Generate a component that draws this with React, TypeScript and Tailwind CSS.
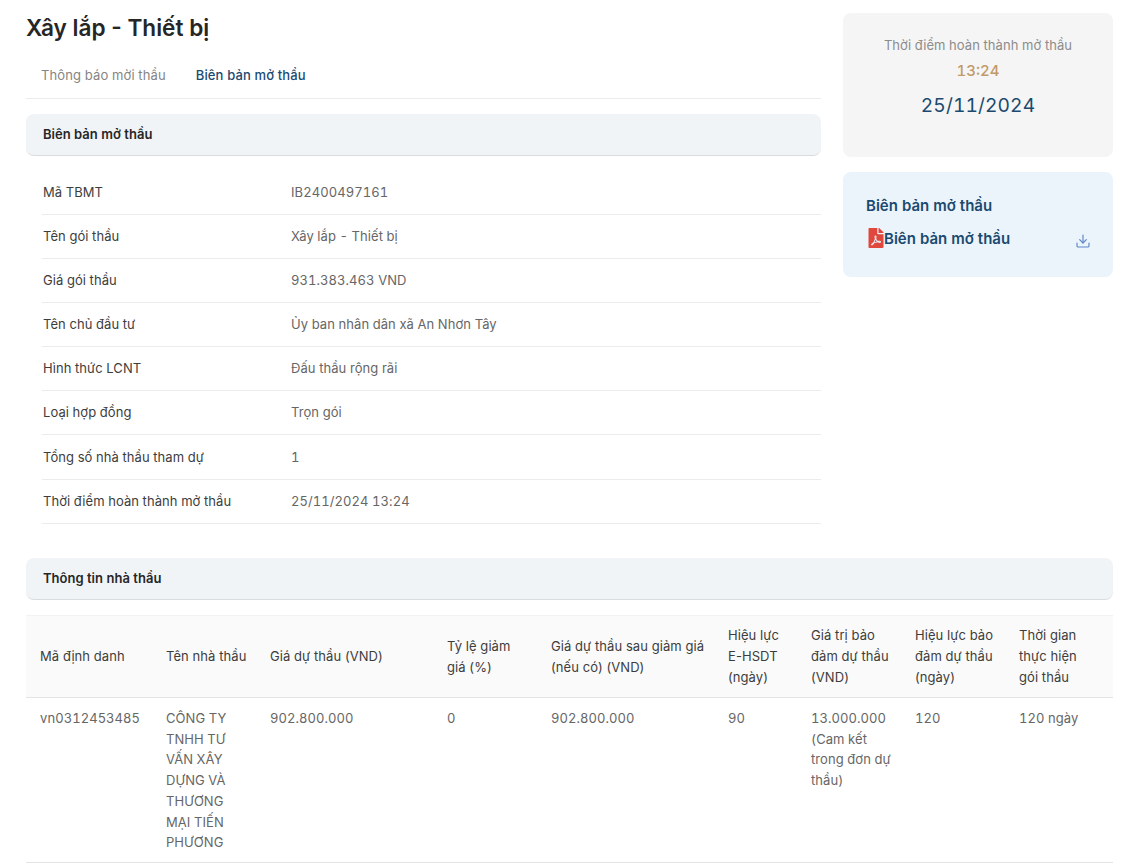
import React from 'react';
import { Download } from 'lucide-react';
import { FaFilePdf } from 'react-icons/fa';

const infoRows = [
  ['Mã TBMT', 'IB2400497161'],
  ['Tên gói thầu', 'Xây lắp - Thiết bị'],
  ['Giá gói thầu', '931.383.463 VND'],
  ['Tên chủ đầu tư', 'Ủy ban nhân dân xã An Nhơn Tây'],
  ['Hình thức LCNT', 'Đấu thầu rộng rãi'],
  ['Loại hợp đồng', 'Trọn gói'],
  ['Tổng số nhà thầu tham dự', '1'],
  ['Thời điểm hoàn thành mở thầu', '25/11/2024 13:24'],
];

const columns = [
  { label: 'Mã định danh', width: 'w-[126px]' },
  { label: 'Tên nhà thầu', width: 'w-[104px]' },
  { label: 'Giá dự thầu (VND)', width: 'w-[177px]' },
  { label: 'Tỷ lệ giảm giá (%)', width: 'w-[104px]' },
  { label: 'Giá dự thầu sau giảm giá (nếu có) (VND)', width: 'w-[177px]' },
  { label: 'Hiệu lực E-HSDT (ngày)', width: 'w-[83px]' },
  { label: 'Giá trị bảo đảm dự thầu (VND)', width: 'w-[104px]' },
  { label: 'Hiệu lực bảo đảm dự thầu (ngày)', width: 'w-[104px]' },
  { label: 'Thời gian thực hiện gói thầu', width: 'w-[108px]' },
];

const bidder = [
  'vn0312453485',
  'CÔNG TY TNHH TƯ VẤN XÂY DỰNG VÀ THƯƠNG MẠI TIẾN PHƯƠNG',
  '902.800.000',
  '0',
  '902.800.000',
  '90',
  '13.000.000 (Cam kết trong đơn dự thầu)',
  '120',
  '120 ngày',
];

const SectionBar: React.FC<{ title: string }> = ({ title }) => (
  <div className="h-[42px] flex items-center px-[17px] bg-[#f1f4f7] rounded-lg border-b border-[#d9dcdf] text-[13px] font-semibold text-[#262626]">
    {title}
  </div>
);

const App: React.FC = () => {
  return (
    <div className="min-h-screen bg-white pl-[26px] pr-2 pt-[13px] font-['Inter',sans-serif] tabular-nums overflow-hidden">
      <div className="flex gap-[22px]">
        <div className="w-[795px]">
          <h1 className="text-[22.6px] leading-[30px] font-semibold text-[#262626] normal-nums">Xây lắp - Thiết bị</h1>
          <div className="mt-[10px] h-[46px] flex items-center gap-[30px] px-[15px] border-b border-[#ececec] text-[13px] tracking-[0.13px]">
            <span className="text-[#858585]">Thông báo mời thầu</span>
            <span className="text-[#1b4a70] font-medium">Biên bản mở thầu</span>
          </div>
          <div className="mt-[15px]">
            <SectionBar title="Biên bản mở thầu" />
          </div>
          <div className="mt-[15px]">
            {infoRows.map(([label, value], i) => (
              <div key={label} className={`ml-[16px] flex items-center border-b border-[#ececec] text-[13px] tracking-[0.07px] ${i === 6 ? 'h-[45px] pt-[2px]' : 'h-[44px]'}`}>
                <div className="w-[249px] text-[#3d3d3d] pl-px">{label}</div>
                <div className="text-[#666666]">{value}</div>
              </div>
            ))}
          </div>
        </div>
        <div className="w-[270px]">
          <div className="h-[144px] bg-[#f5f5f5] rounded-lg pt-[23px] flex flex-col items-center">
            <div className="text-[13px] leading-[18px] text-[#8c8c8c] tracking-[0.07px]">Thời điểm hoàn thành mở thầu</div>
            <div className="mt-[8px] text-[15px] leading-[18px] font-medium text-[#c29a68]">13:24</div>
            <div className="mt-[11px] text-[19.2px] leading-[28px] font-normal text-[#1b4a70] tracking-[0.1px]">25/11/2024</div>
          </div>
          <div className="mt-[15px] h-[105px] bg-[#ebf4fb] rounded-lg pl-[23px] pr-[21px] pt-[24px]">
            <div className="text-[15px] leading-[20px] font-semibold text-[#1b4a70]">Biên bản mở thầu</div>
            <div className="mt-[11px] flex items-center justify-between">
              <div className="flex items-start text-[15px] leading-[20px] font-semibold text-[#1b4a70]">
                <FaFilePdf className="w-[16px] h-[20px] ml-[2px] text-[#e0483e]" />
                <span className="mt-px">Biên bản mở thầu</span>
              </div>
              <Download className="w-[16px] h-[16px] mt-[6px] mr-[1px] text-[#5f86c9]" strokeWidth={1.75} />
            </div>
          </div>
        </div>
      </div>

      <div className="mt-[34px]">
        <SectionBar title="Thông tin nhà thầu" />
      </div>
      <table className="mt-[15px] w-[1087px] table-fixed border-collapse text-[13px] tracking-[0.07px]">
        <thead>
          <tr className="h-[82px] bg-[#fafafa] border-b border-[#e3e3e3] border-t border-t-[#f2f2f2]">
            {columns.map(col => (
              <th key={col.label} className={`${col.width} pl-[14px] pr-[8px] last:pr-[24px] text-left font-normal normal-nums leading-[21px] text-[#3d3d3d] align-middle`}>
                {col.label}
              </th>
            ))}
          </tr>
        </thead>
        <tbody>
          <tr className="h-[165px] border-b border-[#e3e3e3]">
            {bidder.map((value, i) => (
              <td key={i} className="pl-[14px] pr-[6px] pt-[10px] align-top leading-[20.7px] text-[#666666]">
                {value}
              </td>
            ))}
          </tr>
        </tbody>
      </table>
    </div>
  );
};

export default App;
